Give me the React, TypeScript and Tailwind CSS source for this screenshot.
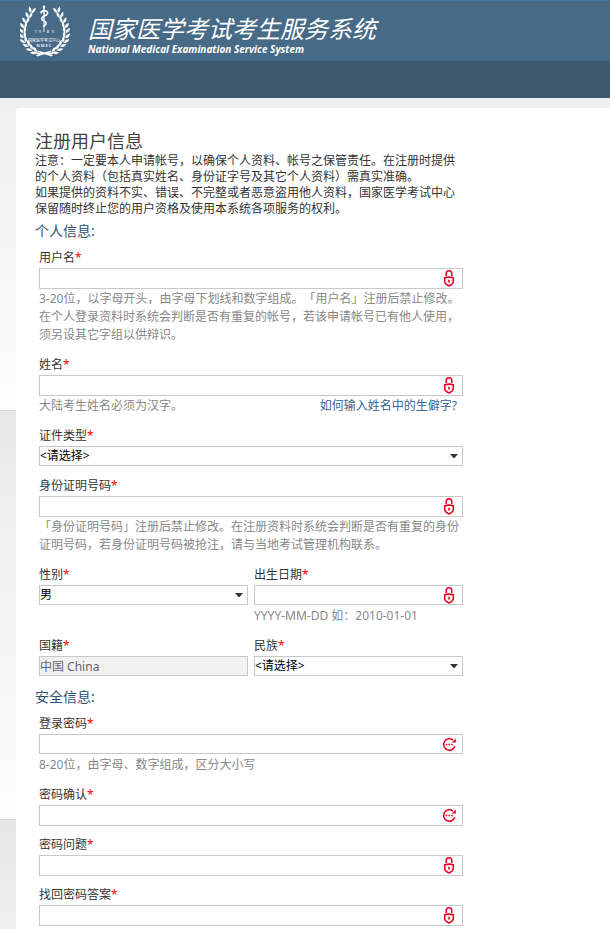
import React, { useState } from "react";
import { clsx } from "clsx";

// one side of the wreath, the other side is mirrored
const leaves = [
  { x: 12, y: 6, r: 14 },
  { x: 9, y: 11, r: 6 },
  { x: 6, y: 16, r: 0 },
  { x: 4, y: 21, r: -8 },
  { x: 3, y: 26, r: -14 },
  { x: 3, y: 31, r: -20 },
  { x: 4, y: 36, r: -28 },
  { x: 7, y: 40, r: -38 },
  { x: 10, y: 44, r: -50 },
  { x: 14, y: 47, r: -64 },
];

function WreathSide() {
  return (
    <g>
      {leaves.map(leaf => (
        <g key={leaf.y} transform={`translate(${leaf.x} ${leaf.y}) rotate(${leaf.r})`}>
          <path d="M-0.2 3.2 Q-4.4 1.6 -3.4 -2.8 Q0.4 -0.8 -0.2 3.2Z" />
          <path d="M0.4 3.2 Q-0.2 -1.2 3 -3 Q4.4 1.2 0.4 3.2Z" />
        </g>
      ))}
      <path d="M14 47.6 Q21 50.2 31 46.4 L31.8 47.6 Q22 52.6 14 49Z" />
      <path d="M24.6 48.4 L33 51 L31.6 52.4 L23.6 49.8Z" />
    </g>
  );
}

function Logo() {
  return (
    <svg width="50" height="54" viewBox="0 0 50 54" fill="white" className="shrink-0" aria-hidden="true">
      <WreathSide />
      <g transform="translate(49 0) scale(-1 1)">
        <WreathSide />
      </g>
      <circle cx="24" cy="2.8" r="1.2" />
      <path d="M23.2 2h1.6l-.4 26h-.8z" />
      <path
        d="M21 9.4 Q21 6.8 24.4 6.6 Q28.2 7 27.6 9.4 Q26.8 11.2 23.6 12.4 Q20.8 14 22.2 16 L25.4 17.8 Q27.2 19.4 25 21.2 L23.4 22.6"
        fill="none"
        stroke="white"
        strokeWidth="1.6"
      />
      <g fontFamily="'Noto Sans', 'Noto Sans CJK SC', sans-serif" textAnchor="middle" fontSize="4">
        <text x="16" y="29">1</text>
        <text x="20" y="29">9</text>
        <text x="28" y="29">8</text>
        <text x="33" y="29">5</text>
        <text x="24" y="38">国家医学考试中心</text>
        <text x="24" y="43" fontWeight="600">N M E C</text>
      </g>
    </svg>
  );
}

function LockIcon() {
  return (
    <svg width="12" height="17" viewBox="0 0 12 17" fill="none" stroke="#e60021" aria-hidden="true">
      <path d="M3.2 6V3.6a2.8 2.8 0 0 1 5.6 0V6" strokeWidth="1.5" />
      <path d="M6 7.1c1.4 0 2.8.2 4.3.6v3.5c0 2.3-1.9 3.7-4.3 4.7-2.4-1-4.3-2.4-4.3-4.7V7.7c1.5-.4 2.9-.6 4.3-.6z" strokeWidth="1.6" />
      <path d="M6 9.8v2.6" strokeWidth="1.6" />
    </svg>
  );
}

function CheckAgainIcon() {
  return (
    <svg width="15" height="15" viewBox="0 0 15 15" fill="none" stroke="#e60021" aria-hidden="true">
      <path d="M11 3.1A5.7 5.7 0 1 0 12.8 9.2" strokeWidth="1.5" />
      <path d="M13.8 1.4v4.2H9.8z" fill="#e60021" stroke="none" />
      <path d="M3.6 7.5h1.6M6.4 7.5h1.6M9.2 7.5h1.6" strokeWidth="1.6" />
    </svg>
  );
}

interface FieldProps {
  id: string;
  label: string;
  hint?: React.ReactNode;
  children: React.ReactNode;
}

function Field({ id, label, hint, children }: FieldProps) {
  return (
    <div className="min-w-0 flex-1">
      <label htmlFor={id} className="block leading-5 text-[#333]">
        {label}<span className="text-[#f00]">*</span>
      </label>
      <div className="min-h-[21px]">{children}</div>
      {hint && <div className="pt-px pb-[2px] text-[#888]">{hint}</div>}
    </div>
  );
}

interface TextFieldProps {
  id: string;
  label: string;
  hint?: React.ReactNode;
  type?: string;
  short?: boolean;
}

function TextField({ id, label, hint, type = "text", short }: TextFieldProps) {
  const [value, setValue] = useState("");

  return (
    <Field id={id} label={label} hint={hint}>
      <div className="relative">
        <input
          id={id}
          type={type}
          value={value}
          onChange={e => setValue(e.target.value)}
          className={clsx(
            "block w-full border border-[#c8c8c8] bg-white pl-px pr-6 text-black focus:outline-none",
            short ? "h-5" : "h-[21px]"
          )}
        />
        <span className="pointer-events-none absolute inset-y-0 right-1 flex w-5 items-center justify-center">
          {type === "password" ? <CheckAgainIcon /> : <LockIcon />}
        </span>
      </div>
    </Field>
  );
}

function SelectField({ id, label, options }: { id: string; label: string; options: string[] }) {
  return (
    <Field id={id} label={label}>
      <div className="relative">
        <select
          id={id}
          className="block h-5 w-full appearance-none border border-[#c8c8c8] bg-white pr-5 text-black focus:outline-none"
        >
          {options.map(option => (
            <option key={option}>{option}</option>
          ))}
        </select>
        <svg
          width="8"
          height="4"
          viewBox="0 0 8 4"
          fill="#333"
          className="pointer-events-none absolute right-[5px] top-2"
          aria-hidden="true"
        >
          <path d="M0 0h8L4.5 4h-1z" />
        </svg>
      </div>
    </Field>
  );
}

function Section({ title, children }: { title: string; children: React.ReactNode }) {
  return (
    <section>
      <h2 className="mb-[3px] text-sm leading-7 text-[#2f5271]">{title}</h2>
      <div className="flex flex-col gap-[9px] pl-1">{children}</div>
    </section>
  );
}

export default function App() {
  return (
    <div className="flex min-h-screen flex-col bg-[linear-gradient(#d8d8d8_0px,#d8d8d8_1px,#e6e6e6_1px,#efefef_96px,#fdfdfd_100%)] bg-[length:100%_409px] bg-[position:0_1px] font-['Noto_Sans','Noto_Sans_CJK_SC',sans-serif] text-xs leading-[18px] [text-spacing-trim:space-all]">
      <header>
        <div className="flex h-[61px] gap-[18px] border-t border-[#4474a0] bg-[#476a87] pl-5 pt-[3px] text-white">
          <Logo />
          <div className="pt-[13px]">
            <div className="whitespace-nowrap font-['Liberation_Sans','Noto_Sans_CJK_SC',sans-serif] text-2xl leading-[26px] italic">
              国家医学考试考生服务系统
            </div>
            <div className="whitespace-nowrap text-[10px] leading-3 font-bold italic">
              National Medical Examination Service System
            </div>
          </div>
        </div>
        <div className="h-[37px] bg-[#3b5971]" />
      </header>

      <main className="mt-[10px] ml-4 flex-1 rounded-tl bg-white px-[19px] pt-[21px] pb-[3px]">
        <form className="max-w-[428px]" onSubmit={e => e.preventDefault()}>
          <h1 className="text-lg leading-6 text-[#444]">注册用户信息</h1>
          <p className="leading-4 text-[#333]">
            注意：一定要本人申请帐号，以确保个人资料、帐号之保管责任。在注册时提供的个人资料（包括真实姓名、身份证字号及其它个人资料）需真实准确。
            <br />
            如果提供的资料不实、错误、不完整或者恶意盗用他人资料，国家医学考试中心保留随时终止您的用户资格及使用本系统各项服务的权利。
          </p>

          <div className="flex flex-col gap-[6px]">
            <Section title="个人信息:">
              <TextField
                id="username"
                label="用户名"
                hint="3-20位，以字母开头，由字母下划线和数字组成。「用户名」注册后禁止修改。在个人登录资料时系统会判断是否有重复的帐号，若该申请帐号已有他人使用，须另设其它字组以供辩识。"
              />
              <TextField
                id="realname"
                label="姓名"
                hint={
                  <div className="flex justify-between pr-[6px]">
                    <span>大陆考生姓名必须为汉字。</span>
                    <a href="#rare" className="text-[#336699]">如何输入姓名中的生僻字?</a>
                  </div>
                }
              />
              <SelectField id="idtype" label="证件类型" options={["<请选择>", "居民身份证", "护照"]} />
              <TextField
                id="idnumber"
                label="身份证明号码"
                hint="「身份证明号码」注册后禁止修改。在注册资料时系统会判断是否有重复的身份证明号码，若身份证明号码被抢注，请与当地考试管理机构联系。"
              />
              <div className="flex gap-[6px]">
                <SelectField id="gender" label="性别" options={["男", "女"]} />
                <TextField id="birthday" label="出生日期" short hint="YYYY-MM-DD 如：2010-01-01" />
              </div>
              <div className="flex gap-[6px]">
                <Field id="country" label="国籍">
                  <input
                    id="country"
                    defaultValue="中国 China"
                    readOnly
                    className="block h-5 w-full border border-[#c8c8c8] bg-[#f1f1f1] text-[#666] focus:outline-none"
                  />
                </Field>
                <SelectField id="nation" label="民族" options={["<请选择>", "汉族"]} />
              </div>
            </Section>

            <Section title="安全信息:">
              <TextField id="password" type="password" label="登录密码" hint="8-20位，由字母、数字组成，区分大小写" short />
              <TextField id="password2" type="password" label="密码确认" />
              <TextField id="question" label="密码问题" />
              <TextField id="answer" label="找回密码答案" />
            </Section>
          </div>
        </form>
      </main>
    </div>
  );
}
